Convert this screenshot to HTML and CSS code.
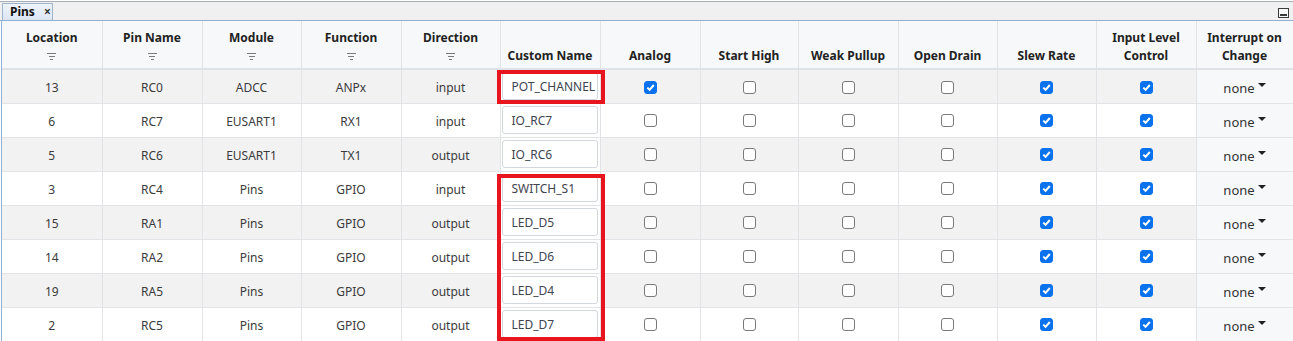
FILE: index.html
```html
<!DOCTYPE html>
<html lang="en">

<head>
  <meta charset="UTF-8">
  <title>Pins</title>
  <link rel="stylesheet" href="styles.css">
</head>

<body>
  <!-- Tab strip -->
  <div class="tabbar">
    <div class="tab">Pins <span class="tab-close">&#215;</span></div>
    <div class="tab-min"><span></span></div>
  </div>

  <div class="grid-wrap">
    <table class="pins">
      <colgroup>
        <col style="width:100px"><col style="width:100px"><col style="width:99px"><col style="width:100px">
        <col style="width:99px"><col style="width:100px"><col style="width:100px"><col style="width:98px">
        <col style="width:100px"><col style="width:99px"><col style="width:99px"><col style="width:100px">
        <col style="width:97px">
      </colgroup>
      <thead>
        <tr>
          <th><div class="th-in">Location<span class="filter"><i></i><i></i><i></i></span></div></th>
          <th><div class="th-in">Pin Name<span class="filter"><i></i><i></i><i></i></span></div></th>
          <th><div class="th-in">Module<span class="filter"><i></i><i></i><i></i></span></div></th>
          <th><div class="th-in">Function<span class="filter"><i></i><i></i><i></i></span></div></th>
          <th><div class="th-in">Direction<span class="filter"><i></i><i></i><i></i></span></div></th>
          <th class="th-low">Custom Name</th>
          <th class="th-low">Analog</th>
          <th class="th-low">Start High</th>
          <th class="th-low">Weak Pullup</th>
          <th class="th-low">Open Drain</th>
          <th class="th-low">Slew Rate</th>
          <th class="th-two">Input Level<br>Control</th>
          <th class="th-two">Interrupt on<br>Change</th>
        </tr>
      </thead>
      <tbody id="rows"></tbody>
    </table>

    <!-- highlight annotations -->
    <div class="mark mark-one"></div>
    <div class="mark mark-many"></div>
  </div>

  <script>
    // location, pin, module, function, direction, custom name, analog
    const pins = [
      ['13', 'RC0', 'ADCC', 'ANPx', 'input', 'POT_CHANNEL', true],
      ['6', 'RC7', 'EUSART1', 'RX1', 'input', 'IO_RC7', false],
      ['5', 'RC6', 'EUSART1', 'TX1', 'output', 'IO_RC6', false],
      ['3', 'RC4', 'Pins', 'GPIO', 'input', 'SWITCH_S1', false],
      ['15', 'RA1', 'Pins', 'GPIO', 'output', 'LED_D5', false],
      ['14', 'RA2', 'Pins', 'GPIO', 'output', 'LED_D6', false],
      ['19', 'RA5', 'Pins', 'GPIO', 'output', 'LED_D4', false],
      ['2', 'RC5', 'Pins', 'GPIO', 'output', 'LED_D7', false]
    ];

    function box(on) {
      return '<span class="cb' + (on ? ' on' : '') + '">' +
        (on ? '<svg viewBox="0 0 11 11"><path d="M2.3 5.6 L4.6 7.8 L8.8 3" /></svg>' : '') + '</span>';
    }

    const tbody = document.getElementById('rows');
    pins.forEach(function (p) {
      const tr = document.createElement('tr');
      tr.innerHTML =
        '<td class="txt">' + p[0] + '</td><td class="txt">' + p[1] + '</td><td class="txt">' + p[2] + '</td>' +
        '<td class="txt">' + p[3] + '</td><td class="txt">' + p[4] + '</td>' +
        '<td class="name-cell"><div class="name-input">' + p[5] + '</div></td>' +
        '<td>' + box(p[6]) + '</td><td>' + box(false) + '</td><td>' + box(false) + '</td><td>' + box(false) + '</td>' +
        '<td>' + box(true) + '</td><td>' + box(true) + '</td>' +
        '<td class="ioc"><span class="ioc-in">none<span class="caret"></span></span></td>';
      tbody.appendChild(tr);
    });
  </script>
</body>

</html>
```

FILE: styles.css
```css
/* Base */
body,
html {
  margin: 0;
  padding: 0;
  font-family: "Noto Sans", "Open Sans", sans-serif;
  background: #ffffff;
  overflow: hidden;
}

/* Tab strip */
.tabbar {
  position: relative;
  height: 18px;
  margin-top: 1px;
  border-top: 1px solid #a7adb5;
  border-bottom: 1px solid #8fb0d2;
  background: #f0f0f0;
  display: flex;
  align-items: flex-end;
  padding-left: 2px;
}

.tab {
  box-sizing: border-box;
  width: 51px;
  height: 17px;
  padding: 0 0 0 7px;
  background: linear-gradient(#eef3fa, #dce6f3);
  border: 1px solid #9fb3cc;
  border-bottom: none;
  font-size: 12px;
  font-weight: bold;
  color: #111;
  line-height: 16px;
  display: flex;
  align-items: center;
  gap: 9px;
}

.tab-close {
  font-size: 12px;
  font-weight: bold;
  color: #333;
}

.tab-min {
  position: absolute;
  right: 4px;
  top: 6px;
  width: 9px;
  height: 8px;
  border: 1px solid #3a3a3a;
  background: #f8f8f8;
}

.tab-min span {
  position: absolute;
  left: 1px;
  right: 1px;
  bottom: 1px;
  height: 2px;
  background: #3a3a3a;
}

/* Grid */
.grid-wrap {
  position: relative;
  border-left: 1px solid #8fb0d2;
  margin-left: 1px;
}

.pins {
  table-layout: fixed;
  border-collapse: collapse;
  width: 1291px;
  font-size: 12px;
  line-height: 16px;
  color: #3b3b3b;
}

.pins th {
  box-sizing: border-box;
  height: 48px;
  background: #f7f8fa;
  border-right: 1px solid #e1e3e7;
  border-bottom: 2px solid #dfe2e7;
  color: #222;
  font-weight: bold;
  font-size: 12px;
  text-align: center;
  padding: 0;
  vertical-align: top;
}

.th-in {
  padding-top: 9px;
  display: flex;
  flex-direction: column;
  align-items: center;
  gap: 7px;
}

.pins th.th-low {
  vertical-align: bottom;
  padding-bottom: 4px;
}

.pins th.th-two {
  vertical-align: top;
  padding-top: 8px;
  line-height: 18px;
}

/* filter glyph: three shrinking bars */
.filter {
  display: flex;
  flex-direction: column;
  align-items: center;
  gap: 2px;
}

.filter i {
  display: block;
  height: 1px;
  background: #7a7a7a;
  width: 9px;
}

.filter i:nth-child(2) {
  width: 6px;
}

.filter i:nth-child(3) {
  width: 3px;
}

.pins td {
  box-sizing: border-box;
  height: 34px;
  padding: 0;
  text-align: center;
  border-right: 1px solid #e1e3e7;
  border-bottom: 1px solid #e1e3e7;
}

.pins td.txt {
  padding-top: 3px;
}

.pins tbody tr:nth-child(odd) td {
  background: #f2f2f2;
}

.pins tbody tr td.ioc {
  background: #f7f8fa;
  font-size: 13px;
  color: #333;
}

.ioc-in {
  position: relative;
  top: 2px;
}

.pins tbody tr td.name-cell {
  background: #ffffff;
}

.name-input {
  box-sizing: border-box;
  margin: 0 2px 0 1px;
  height: 28px;
  border: 1px solid #d3d8df;
  border-radius: 3px;
  text-align: left;
  padding-left: 9px;
  padding-top: 1px;
  line-height: 26px;
  color: #3e4450;
  font-size: 12px;
}

/* checkboxes */
.cb {
  display: inline-block;
  width: 11px;
  height: 11px;
  border: 1px solid #7a7a7a;
  border-radius: 3px;
  background: #fff;
  vertical-align: middle;
}

.cb.on {
  border-color: #0b72ee;
  background: #0b72ee;
}

.cb svg {
  display: block;
  width: 11px;
  height: 11px;
}

.cb path {
  fill: none;
  stroke: #fff;
  stroke-width: 2;
}

.caret {
  display: inline-block;
  width: 0;
  height: 0;
  margin-left: 3px;
  border-left: 4px solid transparent;
  border-right: 4px solid transparent;
  border-top: 4px solid #222;
  vertical-align: 6px;
}

/* red annotation boxes over the Custom Name column */
.mark {
  position: absolute;
  border: 4px solid #e8141e;
  box-sizing: border-box;
  pointer-events: none;
}

.mark-one {
  left: 495px;
  top: 49px;
  width: 108px;
  height: 34px;
}

.mark-many {
  left: 495px;
  top: 153px;
  width: 108px;
  height: 167px;
}
```
